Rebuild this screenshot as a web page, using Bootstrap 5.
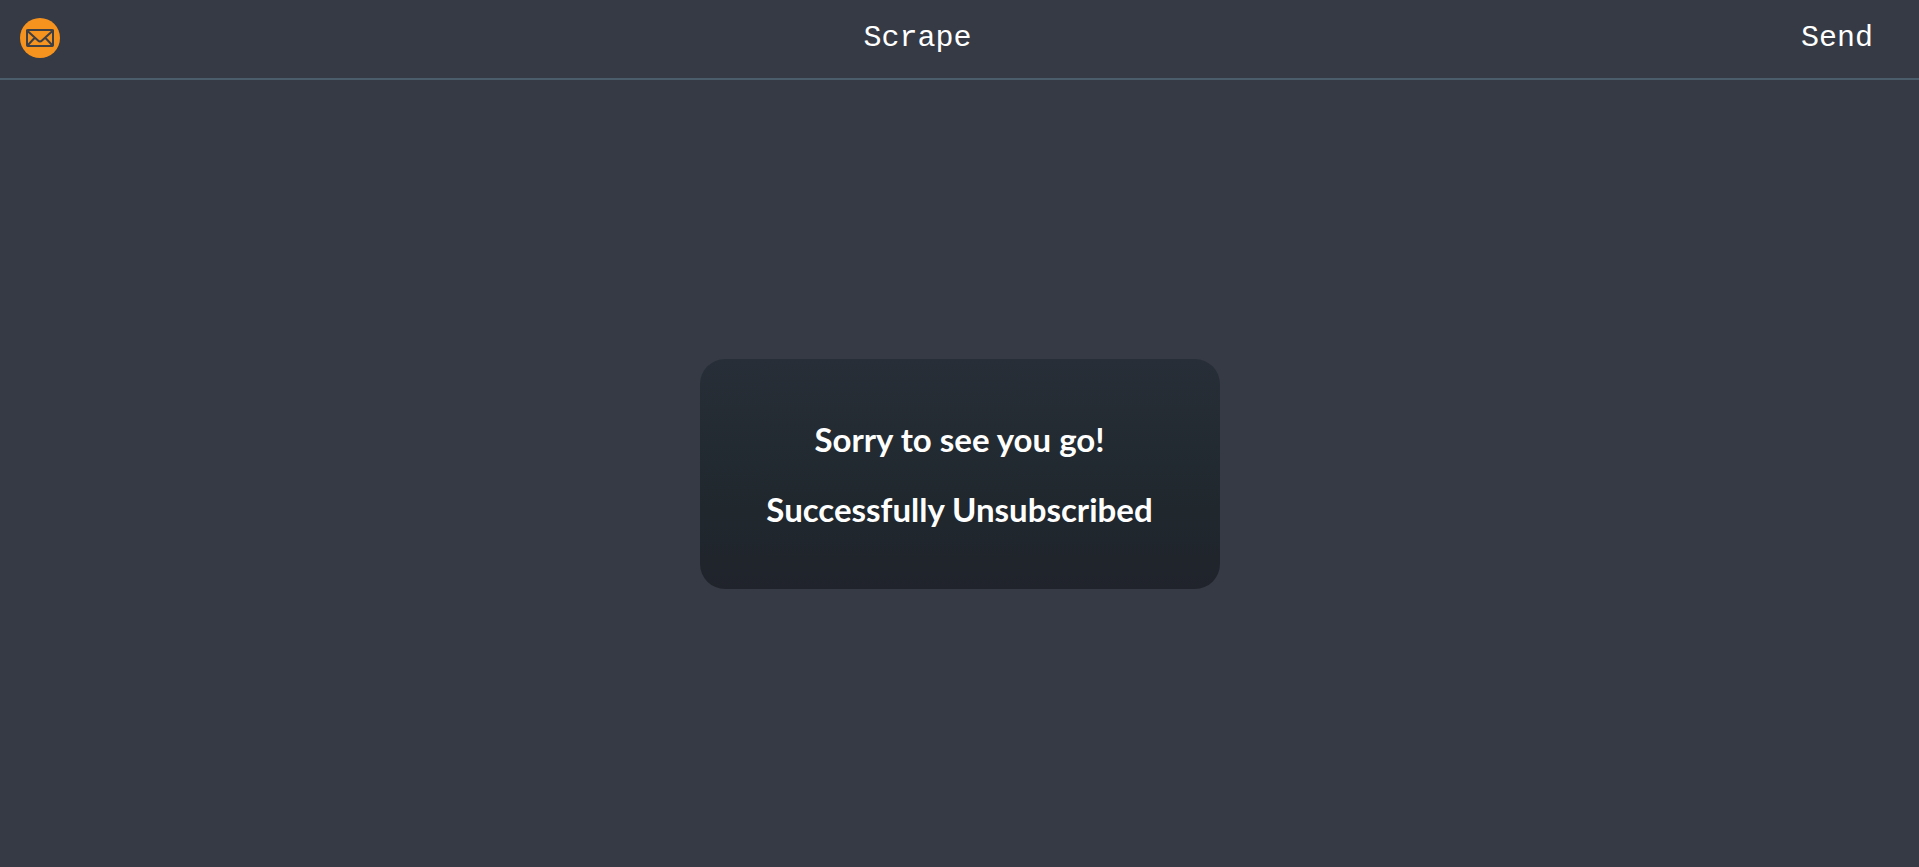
<!DOCTYPE html>
<html lang="en">
<head>
<meta charset="utf-8">
<meta name="viewport" content="width=device-width, initial-scale=1">
<title>Unsubscribed</title>
<link rel="stylesheet" href="https://cdn.jsdelivr.net/npm/bootstrap@5.3.0/dist/css/bootstrap.min.css">
<style>
  body { background: #363a44; color: #fff; }
  .site-header { height: 80px; padding: 0 20px 2px; border-bottom: 2px solid #4b5c6b; }
  .site-link { font: 30px/36px "Courier New", "Liberation Mono", monospace; }
  .send-link { padding: 0 26px; }
  .logo-link svg { width: 40px; height: 40px; }
  .notice { width: 520px; max-width: 100%; height: 230px; gap: 30px; border-radius: 25px;
    background: linear-gradient(#272e37, #20282e 65%, #20232b); }
  .notice-line { font: 700 33px/40px "Comic Sans MS", Lato, sans-serif; }
</style>
</head>
<body class="d-flex flex-column min-vh-100">
<header class="site-header">
  <nav class="d-flex align-items-center justify-content-between h-100" aria-label="Main">
    <a class="logo-link d-flex" href="#" aria-label="Home">
      <svg viewBox="0 0 40 40" aria-hidden="true">
        <circle cx="20" cy="20" r="20" fill="#f6921e"/>
        <g fill="none" stroke="#3d3f45" stroke-width="2" stroke-linejoin="round" stroke-linecap="round">
          <rect x="7" y="12" width="26" height="16" rx="1"/>
          <path d="M7 12.500 18 22.500q2 2 4 0L33 12.500M7.500 27.500 14.500 20M32.500 27.500 25.500 20"/>
        </g>
      </svg>
    </a>
    <a class="site-link text-white text-decoration-none" href="#">Scrape</a>
    <a class="site-link send-link text-white text-decoration-none" href="#">Send</a>
  </nav>
</header>
<main class="flex-grow-1 d-flex align-items-center justify-content-center">
  <section class="notice d-flex flex-column justify-content-center text-center">
    <h1 class="notice-line m-0">Sorry to see you go!</h1>
    <h2 class="notice-line m-0">Successfully Unsubscribed</h2>
  </section>
</main>
<script src="https://cdn.jsdelivr.net/npm/bootstrap@5.3.0/dist/js/bootstrap.bundle.min.js"></script>
</body>
</html>
